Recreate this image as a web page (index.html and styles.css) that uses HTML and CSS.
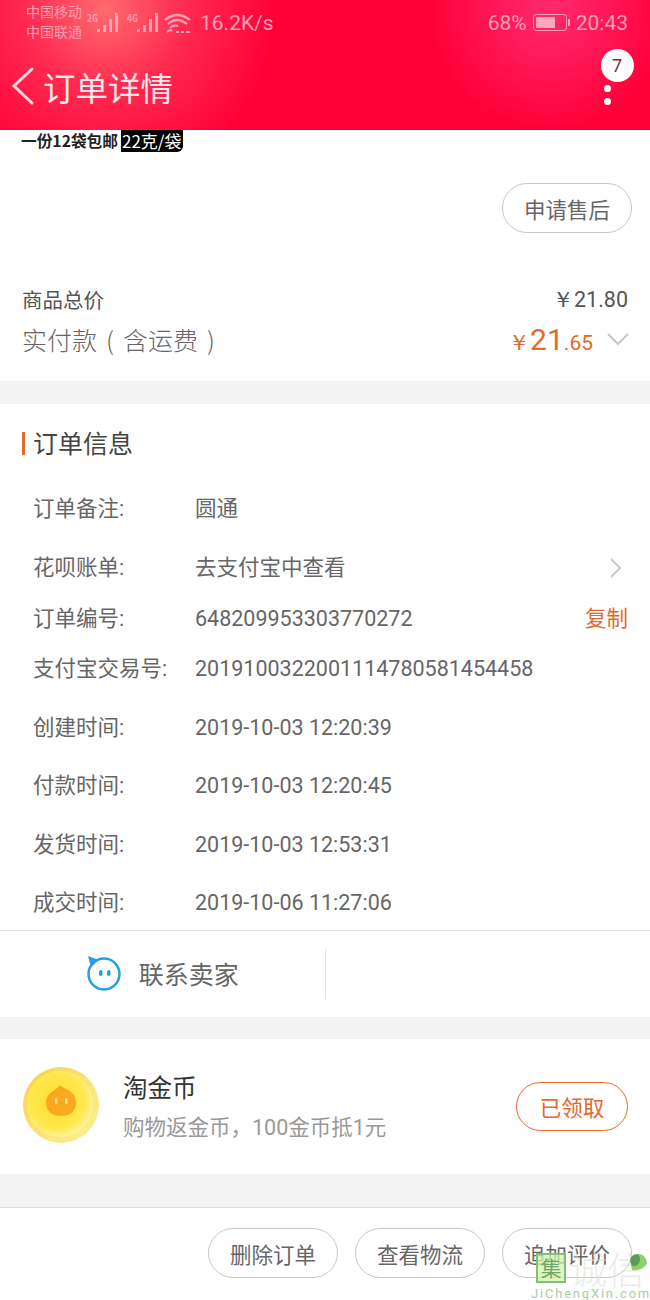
FILE: index.html
```html
<!DOCTYPE html>
<html lang="zh">
<head>
    <meta charset="UTF-8">
    <meta name="viewport" content="width=device-width, initial-scale=1.0">
    <title>订单详情</title>
    <link rel="stylesheet" href="styles.css">
</head>
<body>
    <div class="phone">
        <div class="top">
            <div class="status">
                <div class="carriers"><div>中国移动</div><div>中国联通</div></div>
                <div class="net"><span class="net-label">2G</span>
                    <svg width="21" height="22" viewBox="0 0 21 22"><path d="M0 20v-3h3v3zM6 20v-7h3v7zM12 20V7h3v13zM18 20V1h3v19z" fill="#ffa3b6"/></svg>
                </div>
                <div class="net"><span class="net-label">4G</span>
                    <svg width="21" height="22" viewBox="0 0 21 22"><path d="M0 20v-3h3v3zM6 20v-7h3v7zM12 20V7h3v13zM18 20V1h3v19z" fill="#ffa3b6"/></svg>
                </div>
                <svg class="wifi" width="28" height="22" viewBox="0 0 28 22" fill="none" stroke="#ffa3b6" stroke-width="2.200"><path d="M1 8q12-10 25 0M4 12q9-8 19 0M6 16q4-4 8-2M3 20q3-3 5-1"/><path d="M12 20h3M17 20h3M22 20h4"/></svg>
                <div class="speed">16.2K/s</div>
                <div class="status-right">
                    <span>68%</span>
                    <span class="battery"><span class="battery-fill"></span></span>
                    <span>20:43</span>
                </div>
            </div>
            <div class="nav">
                <svg class="back" width="24" height="38" viewBox="0 0 24 38" fill="none" stroke="#ffd9e0" stroke-width="3" stroke-linecap="round"><path d="M21 2 3 19l18 17"/></svg>
                <h1>订单详情</h1>
                <div class="more">
                    <span class="badge">7</span>
                    <span class="dot"></span>
                    <span class="dot"></span>
                </div>
            </div>
        </div>

        <div class="section first">
            <div class="promo"><span class="promo-text">一份12袋包邮</span><span class="promo-tag">22克/袋</span></div>
            <div class="after-row"><a class="pill">申请售后</a></div>
            <div class="price-row">
                <span>商品总价</span>
                <span>￥21.80</span>
            </div>
            <div class="paid-row">
                <span class="paid-label">实付款 ( 含运费 )</span>
                <span class="paid-value"><span class="yen">￥</span><span class="big">21</span>.65
                    <svg width="24" height="14" viewBox="0 0 24 14" fill="none" stroke="#c8c8c8" stroke-width="2"><path d="M2 2l10 10L22 2"/></svg>
                </span>
            </div>
        </div>

        <div class="section info">
            <div class="info-title">订单信息</div>
            <div class="rows">
                <div class="row h58"><span class="key">订单备注:</span><span>圆通</span></div>
                <div class="row h58"><span class="key">花呗账单:</span><span>去支付宝中查看</span>
                    <svg class="row-end row-arrow" width="14" height="22" viewBox="0 0 14 22" fill="none" stroke="#c8c8c8" stroke-width="2"><path d="M2 2l9 9-9 9"/></svg>
                </div>
                <div class="row h44"><span class="key">订单编号:</span><span>648209953303770272</span><span class="copy row-end">复制</span></div>
                <div class="row h58"><span class="key">支付宝交易号:</span><span>2019100322001114780581454458</span></div>
                <div class="row h58"><span class="key">创建时间:</span><span>2019-10-03 12:20:39</span></div>
                <div class="row h58"><span class="key">付款时间:</span><span>2019-10-03 12:20:45</span></div>
                <div class="row h58"><span class="key">发货时间:</span><span>2019-10-03 12:53:31</span></div>
                <div class="row h58"><span class="key">成交时间:</span><span>2019-10-06 11:27:06</span></div>
            </div>
            <div class="contact">
                <div class="contact-cell">
                    <svg width="36" height="36" viewBox="0 0 36 36" fill="none"><circle cx="18" cy="19" r="15.500" stroke="#2a9fdc" stroke-width="2.500"/><path d="M2 1l11 4-8 7z" fill="#2a9fdc"/><rect x="13" y="15" width="3.500" height="6" rx="1.700" fill="#2a9fdc"/><rect x="21" y="15" width="3.500" height="6" rx="1.700" fill="#2a9fdc"/></svg>
                    <span>联系卖家</span>
                </div>
                <div class="contact-cell"></div>
            </div>
        </div>

        <div class="section coin">
            <svg class="coin-icon" width="78" height="78" viewBox="0 0 78 78">
                <defs>
                    <linearGradient id="coinEdge" x1="0" y1="0" x2="1" y2="1">
                        <stop offset="0" stop-color="#f7d34a"/>
                        <stop offset="1" stop-color="#fdf09a"/>
                    </linearGradient>
                    <radialGradient id="coinFace" cx="0.45" cy="0.45" r="0.6">
                        <stop offset="0" stop-color="#ffe02e"/>
                        <stop offset="0.7" stop-color="#ffe84e"/>
                        <stop offset="1" stop-color="#fff6b0"/>
                    </radialGradient>
                </defs>
                <circle cx="39" cy="39" r="38" fill="url(#coinEdge)"/>
                <circle cx="38" cy="38" r="33" fill="url(#coinFace)"/>
                <path d="M38 19c2 4 16 4 16 18 0 9-7 13-15 13s-15-4-15-13c0-11 10-12 14-18z" fill="#fba81f"/>
                <rect x="33" y="32" width="2.500" height="6" rx="1.200" fill="#ffdf90"/>
                <rect x="43" y="32" width="2.500" height="6" rx="1.200" fill="#ffdf90"/>
            </svg>
            <div class="coin-text">
                <div class="coin-name">淘金币</div>
                <div class="coin-desc">购物返金币，100金币抵1元</div>
            </div>
            <a class="pill pill-orange">已领取</a>
        </div>

        <div class="gap"></div>

        <div class="bottom">
            <a class="pill">删除订单</a>
            <a class="pill">查看物流</a>
            <a class="pill">追加评价</a>
        </div>

        <div class="watermark">
            <div class="wm-top">
                <span class="wm-box">集</span><span class="wm-name">诚信</span>
                <svg class="wm-leaf" width="22" height="24" viewBox="0 0 20 24"><path d="M10 2c6 0 9 5 9 10-4 5-9 7-15 6C2 12 4 4 10 2z" fill="#8fd06a"/><path d="M4 4c4-3 8-2 8 3s-4 8-7 7-4-7-1-10z" fill="#5d9a58"/></svg>
            </div>
            <div class="wm-url">JiChengXin.com</div>
        </div>
    </div>
</body>
</html>
```

FILE: styles.css
```css
* { box-sizing: border-box; }
html, body { margin: 0; padding: 0; }
body { font-family: "Noto Sans CJK SC", Roboto, sans-serif; background: #f3f3f3; color: #666; }
.phone { width: 650px; height: 1300px; position: relative; overflow: hidden; display: flex; flex-direction: column; }

.top { height: 130px; flex: none; color: #fff; background: radial-gradient(circle at 105px 10px, #ff6a6f 0, #ff2a50 80px, rgba(255,0,60,0) 170px), radial-gradient(circle at 550px 10px, #ff2a70 0, rgba(255,0,60,0) 120px), #ff0139; }
.status { height: 44px; display: flex; align-items: center; padding: 1px 22px 0 26px; color: #ff9db2; }
.carriers { font-size: 14px; line-height: 20px; width: 60px; white-space: nowrap; margin-top: -3px; }
.net { display: flex; align-items: flex-start; margin-left: 1px; width: 39px; }
.net-label { font-size: 10px; font-weight: 700; line-height: 10px; margin-top: 1px; width: 10px; white-space: nowrap; transform: scaleX(0.85); transform-origin: left; }
.wifi { margin-left: -2px; }
.speed { font-family: Roboto, sans-serif; font-size: 21px; margin-left: 8px; }
.status-right { margin-left: auto; display: flex; align-items: center; gap: 6px; font-family: Roboto, sans-serif; font-size: 21px; }
.battery { width: 34px; height: 17px; border: 1px solid #ff9db2; border-radius: 3px; padding: 2px; display: block; position: relative; margin-right: 3px; }
.battery::after { content: ""; position: absolute; right: -4px; top: 4px; width: 2px; height: 7px; background: #ff9db2; }
.battery-fill { display: block; height: 100%; width: 68%; background: #ffa6bb; }
.nav { height: 86px; display: flex; align-items: center; padding-left: 11px; position: relative; }
.nav h1 { margin: -2px 0 0 8px; font-size: 32.500px; font-weight: 400; color: #ffe6ea; }
.back { margin-top: -2px; }
.more { position: absolute; right: 16px; top: 5px; width: 34px; display: flex; flex-direction: column; align-items: center; gap: 6px; }
.badge { width: 33px; height: 33px; border-radius: 50%; background: #fff; color: #7a2a44; font-family: Roboto, sans-serif; font-size: 18px; display: flex; align-items: center; justify-content: center; margin-bottom: -3px; }
.dot { width: 7px; height: 7px; border-radius: 50%; background: #fff; margin-right: 20px; }

.section { background: #fff; flex: none; }
.first { height: 251px; padding: 0 22px; }
.promo { display: flex; height: 22px; font-size: 15.700px; font-weight: 700; color: #222; line-height: 21px; }
.promo-text { padding-right: 3px; margin-left: -1px; white-space: nowrap; }
.promo-tag { background: #000; color: #fff; border-radius: 0 0 6px 0; padding: 0 1px; font-weight: 400; font-size: 17px; white-space: nowrap; }
.after-row { display: flex; justify-content: flex-end; margin-top: 31px; margin-right: -4px; }
.pill { display: flex; align-items: center; justify-content: center; width: 130px; height: 50px; border: 1px solid #c8c8c8; border-radius: 25px; font-size: 21.500px; color: #666; background: #fff; }
.price-row { display: flex; justify-content: space-between; align-items: center; height: 30px; margin-top: 51px; font-size: 20.500px; color: #555; }
.price-row span:last-child { font-family: Roboto, sans-serif; font-size: 21.500px; margin-right: 0; }
.paid-row { display: flex; justify-content: space-between; align-items: center; height: 44px; margin-top: 3px; }
.paid-label { font-size: 25px; font-weight: 300; color: #666; white-space: nowrap; word-spacing: 3.500px; }
.paid-value { display: flex; align-items: baseline; color: #e4692a; font-family: Roboto, sans-serif; font-size: 21px; margin-right: -2px; padding-top: 1px; }
.paid-value .yen { font-size: 22px; margin-right: 0; }
.paid-value .big { font-size: 30px; }
.paid-value svg { margin-left: 13px; align-self: flex-start; margin-top: 10px; }

.info { margin-top: 23px; height: 613px; display: flex; flex-direction: column; }
.info-title { height: 76px; flex: none; margin-left: 22px; display: flex; align-items: center; font-size: 25px; color: #444; position: relative; padding-left: 11px; }
.info-title::before { content: ""; position: absolute; left: 0; top: 28px; width: 3px; height: 23px; background: #e4692a; }
.rows { flex: 1; min-height: 0; }
.row { display: flex; align-items: center; padding: 0 22px 0 33px; font-size: 21.500px; line-height: 30px; color: #666; font-family: Roboto, "Noto Sans CJK SC", sans-serif; white-space: nowrap; }
.h58 { height: 58.500px; }
.h44 { height: 43px; }
.key { width: 162px; flex: none; }
.row-end { margin-left: auto; }
.row-arrow { margin-right: 5px; }
.copy { color: #e4692a; }
.contact { height: 87px; border-top: 1px solid #ddd; display: flex; align-items: center; flex: none; background: #fff; position: relative; }
.contact-cell { flex: 1; height: 50px; display: flex; align-items: center; justify-content: center; gap: 17px; font-size: 25px; color: #666; padding-bottom: 3px; }
.contact-cell:first-child { border-right: 1px solid #e3e3e3; }

.coin { margin-top: 22px; height: 135px; display: flex; align-items: center; padding: 0 22px; }
.coin-icon { flex: none; margin-top: -3px; }
.coin-text { margin-left: 23px; flex: 1; }
.coin-name { font-size: 24.500px; color: #333; line-height: 34px; }
.coin-desc { font-size: 21.500px; color: #999; line-height: 30px; margin-top: 9px; font-family: Roboto, "Noto Sans CJK TC", sans-serif; white-space: nowrap; }
.pill-orange { border-color: #e4692a; color: #e4692a; width: 112px; height: 49px; }

.gap { height: 33px; flex: none; }
.bottom { flex: 1; background: #fff; border-top: 1px solid #ddd; display: flex; justify-content: flex-end; gap: 17px; padding: 20px 18px 0 0; }

.watermark { position: absolute; left: 531px; top: 1252px; width: 119px; }
.wm-top { display: flex; align-items: center; height: 32px; position: relative; }
.wm-box { width: 30px; height: 30px; margin-left: 5px; border: 2px solid #7fc07a; background: rgba(214,243,170,0.75); font-size: 21px; line-height: 25px; text-align: center; color: #6fa86a; flex: none; }
.wm-name { margin-left: 3px; font-size: 38px; font-weight: 300; line-height: 36px; color: rgba(215,225,215,0.6); white-space: nowrap; }
.wm-leaf { position: absolute; right: 1px; top: 0; }
.wm-url { font-family: Roboto, sans-serif; font-size: 13px; letter-spacing: 1.800px; color: #a8cfa4; line-height: 14px; margin-top: 3px; white-space: nowrap; }
```
